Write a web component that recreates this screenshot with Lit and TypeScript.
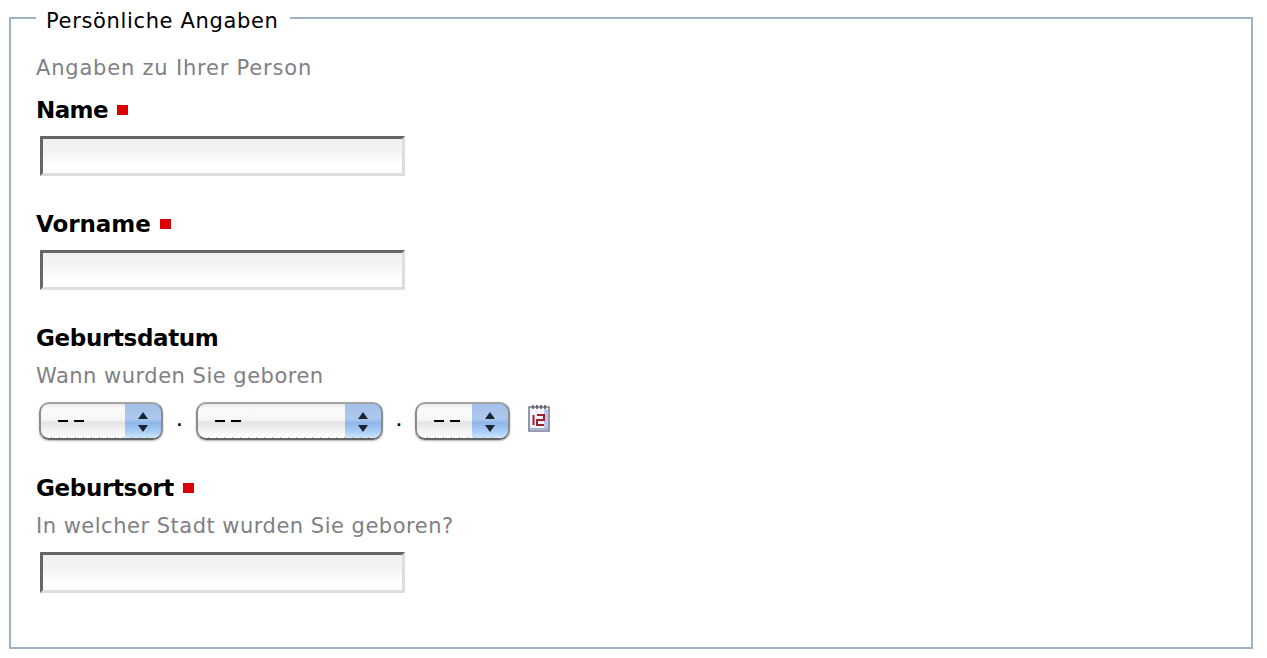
import { LitElement, html, css } from "lit";
import { customElement, property } from "lit/decorators.js";

@customElement("date-select")
class DateSelect extends LitElement {
  @property({ type: Number }) width = 124;
  static styles = css`
    :host { display: block; }
    .sel {
      box-sizing: border-box; height: 38px; display: flex; position: relative;
      border: 2px solid #8c8c8c; border-top-color: #a4a4a4; border-bottom-color: #666;
      border-radius: 10px; overflow: hidden;
      background: linear-gradient(#e9e9e9 0, #fbfbfb 14%, #f6f6f6 46%, #e4e4e4 54%, #f4f4f4 80%, #fff 100%);
      box-shadow: 0 1px 2px rgba(0,0,0,.3);
      filter: blur(.5px);
    }
    .val { flex: 1; padding-left: 17px; display: flex; align-items: center; gap: 6px; }
    .dash { width: 10px; height: 2px; background: #000; }
    .btn {
      width: 36px; display: flex; align-items: center; justify-content: center;
      border-top: 1px solid #3a55b5; border-right: 1px solid #3a55b5; margin: -1px -1px -1px 0;
      background: linear-gradient(#a3c0e8 0, #afc9ee 42%, #8eb6ea 54%, #abcff6 80%, #d8ebfe 100%);
      border-radius: 0 9px 9px 0;
    }
    .ticks {
      position: absolute; left: 10px; right: 10px; bottom: -1px; height: 2px;
      background: repeating-linear-gradient(90deg, #a0a0a0 0 1px, transparent 1px 8px);
    }
  `;
  render() {
    return html`<div class="sel" style="width:${this.width}px">
      <div class="val"><span class="dash"></span><span class="dash"></span></div>
      <div class="btn">
        <svg width="14" height="22" viewBox="0 0 14 22"><path d="M7 1l5 7H2zM2 14h10l-5 7z" fill="#1c2430"/></svg>
      </div>
      <div class="ticks"></div>
    </div>`;
  }
}

@customElement("app-root")
export class AppRoot extends LitElement {
  static styles = css`
    :host { display: block; box-sizing: border-box; background: #fff; height: 658px; padding-top: 3px; font-family: "DejaVu Sans", sans-serif; overflow: hidden; }
    .fs {
      box-sizing: border-box; margin: 0 14px 0 9px; padding: 0 0 0 25px; height: 646px; min-width: 0;
      border: 2px solid #9fb2c4;
    }
    .fs legend { margin-left: 0; padding: 6px 12px 0 10px; font-size: 21px; line-height: 24px; color: #000; letter-spacing: .65px; }
    .hint { font-size: 21px; line-height: 24px; color: #808085; letter-spacing: .5px; }
    .hint.first { letter-spacing: .8px; }
    .label { font-size: 23px; font-weight: 700; line-height: 28px; color: #000; display: flex; align-items: center; gap: 9px; letter-spacing: -.35px; }
    .label.tight { letter-spacing: -.6px; }
    .label.wide { letter-spacing: -.05px; }
    .req { width: 11px; height: 10px; background: #d90000; }
    .input {
      box-sizing: border-box; width: 365px; height: 40px; margin-left: 4px;
      border-style: solid; border-width: 3px; border-color: #666 #ddd #ddd #666;
      background: linear-gradient(#eff0ef, #f3f4f3 40%, #fff 80%);
    }
    .input.tall { height: 41px; }
    .dates { display: flex; align-items: center; margin-left: 3px; }
    .dot { text-align: center; font-size: 14px; font-weight: 700; line-height: 38px; }
    .d1 { width: 33px; }
    .d2 { width: 32px; }
    .cal { margin: 0 0 7px 17px; display: block; filter: blur(.4px); }
    .m1 { margin-top: 23px; }
    .name { margin-top: 16px; }
    .mi { margin-top: 12px; }
    .mi2 { margin-top: 14px; }
    .g2 { margin-top: 34px; }
    .g2b { margin-top: 34px; }
    .g3 { margin-top: 12px; }
    .g4 { margin-top: 14px; }
  `;
  render() {
    return html`<fieldset class="fs">
      <legend>Persönliche Angaben</legend>
      <div class="hint first m1">Angaben zu Ihrer Person</div>
      <div class="label tight name">Name <span class="req"></span></div>
      <div class="input mi"></div>
      <div class="label wide g2">Vorname <span class="req"></span></div>
      <div class="input mi"></div>
      <div class="label g2">Geburtsdatum</div>
      <div class="hint g3">Wann wurden Sie geboren</div>
      <div class="dates g4">
        <date-select width="124"></date-select>
        <span class="dot d1">.</span>
        <date-select width="187"></date-select>
        <span class="dot d2">.</span>
        <date-select width="95"></date-select>
        <svg class="cal" width="24" height="30" viewBox="0 0 24 30">
          <rect x="2" y="4" width="20" height="24" fill="#f3f3fa" stroke="#7b7f95" stroke-width="1.6"/>
          <rect x="17" y="6" width="4" height="21" fill="#b9c8ea"/>
          <rect x="3" y="25" width="18" height="2.5" fill="#a9b4d2"/>
          <path d="M6 2v4M10 2v4M14 2v4M18 2v4" stroke="#555" stroke-width="1.5"/>
          <path d="M6.500 12v10M10 12h7v5h-7v5h7" fill="none" stroke="#a02030" stroke-width="2"/>
        </svg>
      </div>
      <div class="label g2b">Geburtsort <span class="req"></span></div>
      <div class="hint g3">In welcher Stadt wurden Sie geboren?</div>
      <div class="input tall mi2"></div>
    </fieldset>`;
  }
}
